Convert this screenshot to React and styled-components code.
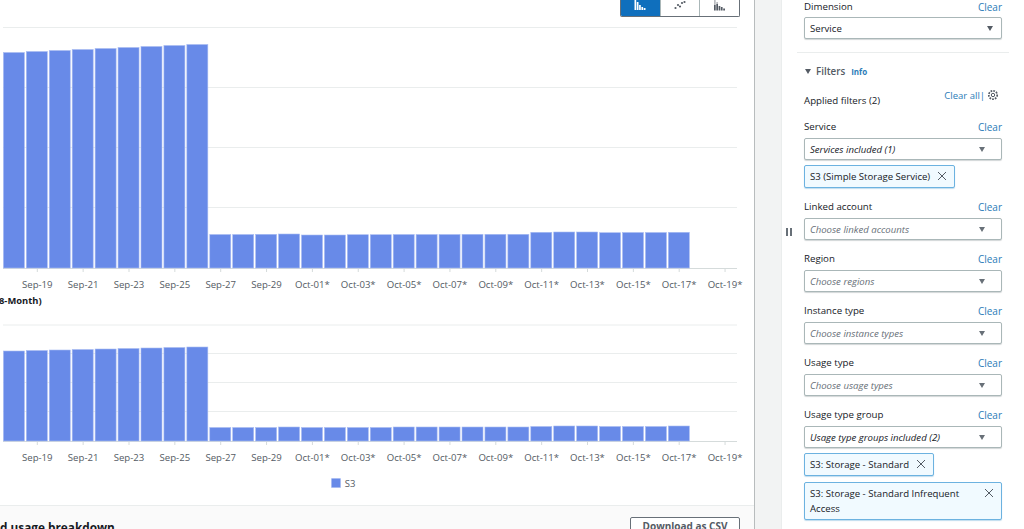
import React from 'react';
import styled, { createGlobalStyle } from 'styled-components';

const Global = createGlobalStyle`
  html, body { margin: 0; padding: 0; background: #fff; }
  body { font-family: "Open Sans", "Noto Sans", sans-serif; color: #16191f; }
`;

const Page = styled.div`
  display: flex;
  width: 1024px;
  height: 529px;
  overflow: hidden;
`;

const Main = styled.main`
  width: 755px;
  flex: none;
  display: flex;
  flex-direction: column;
  border-right: 1px solid #b8bcbd;
  box-sizing: border-box;
`;

const Toolbar = styled.div`
  display: flex;
  justify-content: flex-end;
  height: 17px;
  padding-right: 14px;
  flex: none;
`;

const ToggleGroup = styled.div`
  display: flex;
  width: 120px;
  box-sizing: border-box;
  border: 1px solid #687078;
  border-top: none;
  border-radius: 0 0 2px 2px;
  height: 16.5px;
  overflow: hidden;
`;

const Toggle = styled.div`
  flex: 1;
  display: flex;
  align-items: flex-start;
  justify-content: center;
  background: ${p => (p.$active ? '#0f6fbd' : '#fff')};
  color: ${p => (p.$active ? '#fff' : '#545b64')};
  & + & { border-left: 1px solid #aab7b8; }
`;

const ChartSvg = styled.svg`
  display: block;
  flex: none;
`;

const ChartTitle = styled.div`
  height: 15px;
  margin-left: -1px;
  font-size: 9.4px;
  font-weight: 700;
  line-height: 15px;
  color: #16191f;
  flex: none;
`;

const Legend = styled.div`
  display: flex;
  justify-content: center;
  align-items: center;
  gap: 4px;
  height: 14px;
  margin-top: 11px;
  padding-right: 68px;
  font-size: 9.5px;
  color: #545b64;
  flex: none;
`;

const Swatch = styled.span`
  width: 10px;
  height: 10px;
  background: #688ae8;
  border: 1px solid #a9bcf2;
  box-sizing: border-box;
  border-radius: 1px;
`;

const Footer = styled.div`
  flex: 1;
  margin-top: 15px;
  border-top: 1px solid #eaeded;
  background: #fafafa;
  display: flex;
  justify-content: space-between;
  align-items: flex-start;
  padding: 11px 14px 0 0;
`;

const FooterTitle = styled.div`
  font-size: 11.8px;
  font-weight: 700;
  line-height: 16px;
  margin-top: 2px;
`;

const CsvButton = styled.div`
  width: 110px;
  height: 26px;
  box-sizing: border-box;
  border: 1px solid #687078;
  border-radius: 2px;
  background: #fff;
  text-align: center;
  font-size: 10px;
  font-weight: 700;
  color: #545b64;
  line-height: 17px;
`;

const Gutter = styled.div`
  width: 27px;
  flex: none;
  background: #f2f3f3;
  border-right: 1px solid #eaeded;
  box-sizing: border-box;
`;

const Rail = styled.div`
  width: 22px;
  flex: none;
  box-sizing: border-box;
  padding: 228px 0 0 4px;
`;

const Handle = styled.div`
  display: flex;
  gap: 2.5px;
  height: 8px;
  & > span { width: 1.5px; background: #687078; }
`;

const Side = styled.aside`
  flex: 1;
  min-width: 0;
  background: #fff;
  padding: 0 22px 0 0;
  font-size: 9.7px;
  display: flex;
  flex-direction: column;
`;

const FieldHead = styled.div`
  display: flex;
  justify-content: space-between;
  align-items: center;
  height: 14px;
  margin-bottom: ${p => p.$mb ?? 4}px;
  line-height: 14px;
  color: #16191f;
`;

const Clear = styled.span`
  color: #2b7cb8;
  font-size: 10px;
`;

const Field = styled.div`
  margin-bottom: ${p => p.$mb ?? 12}px;
`;

const Select = styled.div`
  height: 22px;
  box-sizing: border-box;
  border: 1px solid #aab7b8;
  border-radius: 2px;
  display: flex;
  align-items: center;
  justify-content: space-between;
  padding: 0 ${p => (p.$wide ? 8 : 16)}px 0 5px;
  font-size: 9.6px;
  font-style: ${p => (p.$plain ? 'normal' : 'italic')};
  color: ${p => (p.$muted ? '#687078' : '#16191f')};
  box-shadow: 0 1px 1px rgba(0, 28, 36, 0.18);
  background: #fff;
`;

const Caret = styled.span`
  width: 0;
  height: 0;
  border-left: 3.5px solid transparent;
  border-right: 3.5px solid transparent;
  border-top: 5px solid ${p => p.$c || '#687078'};
`;

const Divider = styled.div`
  height: 1px;
  background: #eaeded;
  margin: 13px -7px 0;
`;

const FiltersHead = styled.div`
  display: flex;
  align-items: center;
  height: 14px;
  margin: 11px 0 0 1px;
  gap: 5px;
  font-weight: 600;
  color: #545b64;
  font-size: 9.8px;
`;

const Info = styled.span`
  color: #2b7cb8;
  font-weight: 700;
  font-size: 8px;
  margin-left: 1px;
`;

const AppliedRow = styled.div`
  display: flex;
  justify-content: space-between;
  align-items: flex-start;
  height: 34px;
  margin-top: 8px;
`;

const Applied = styled.span`
  margin-top: 8px;
  line-height: 14px;
`;

const ClearAll = styled.div`
  display: flex;
  align-items: center;
  color: #2b7cb8;
  font-size: 9.5px;
  height: 14px;
  margin-top: 2px;
  padding-right: 3px;
  gap: 2px;
  svg { color: #545b64; }
`;

const Token = styled.div`
  display: ${p => (p.$block ? 'flex' : 'inline-flex')};
  align-items: flex-start;
  justify-content: space-between;
  gap: 7px;
  box-sizing: border-box;
  margin-top: ${p => p.$mt ?? 5}px;
  padding: 3px 7px 3px 5px;
  min-height: 23px;
  width: ${p => (p.$block ? '100%' : 'auto')};
  background: #f1faff;
  border: 1px solid #6cb2e0;
  border-radius: 2px;
  font-size: 9.6px;
  line-height: 15px;
  color: #16191f;
  box-shadow: 0 1px 1px rgba(0, 115, 187, 0.25);
`;

const TokenX = styled.svg`
  flex: none;
  margin-top: 2px;
  color: #545b64;
`;

const BLUE = '#688ae8';
const tops1 = [52.5,51.5,50.5,49.5,48.5,47.5,46.5,45.5,44.5,234.5,234.5,234.3,234,235,235,234.7,234.7,234.5,234.5,234.5,234.3,234.3,234.3,232.3,232,232,232.7,232.5,232.5,232.3];
const tops2 = [351,350.5,350,349.5,349,348.5,348,347.5,347,427.5,427.5,427.5,427,427.5,427.5,427.5,427.5,427,427,427,427,427,427,426.5,426,426,426.5,426.5,426.5,426];
const labels = ['Sep-19','Sep-21','Sep-23','Sep-25','Sep-27','Sep-29','Oct-01*','Oct-03*','Oct-05*','Oct-07*','Oct-09*','Oct-11*','Oct-13*','Oct-15*','Oct-17*','Oct-19*'];

function Chart({ top, height, base, grid, tops }) {
  return (
    <ChartSvg width="754" height={height} viewBox={`0 ${top} 754 ${height}`}>
      {grid.map(y => <line key={y} x1="3" x2="737" y1={y} y2={y} stroke="#eaeded" strokeWidth="1" />)}
      <line x1="3" x2="737" y1={base + 0.5} y2={base + 0.5} stroke="#d5dbdb" strokeWidth="1" />
      {tops.map((t, i) => (
        <rect key={i} x={3.4 + i * 22.93} y={t} width={21} height={base - t} fill={BLUE} stroke="#a9bcf2" strokeWidth="0.6" />
      ))}
      {labels.map((l, i) => {
        const x = 37.3 + i * 45.85;
        return (
          <g key={l}>
            <line x1={x} x2={x} y1={base + 1} y2={base + 4} stroke="#d5dbdb" />
            <text x={x} y={base + 19.5} textAnchor="middle" fontSize="9.6" fill="#545b64" fontFamily='"Open Sans", sans-serif'>{l}</text>
          </g>
        );
      })}
    </ChartSvg>
  );
}

const X = ({ size = 10 }) => (
  <TokenX width={size} height={size} viewBox="0 0 10 10" fill="none" stroke="currentColor" strokeWidth="1">
    <path d="M1 1l8 8M9 1l-8 8" />
  </TokenX>
);

const FilterField = ({ label, value, muted, children, mb }) => (
  <Field $mb={mb}>
    <FieldHead><span>{label}</span><Clear>Clear</Clear></FieldHead>
    <Select $muted={muted}>{value}<Caret /></Select>
    {children}
  </Field>
);

export default function App() {
  return (
    <Page>
      <Global />
      <Main>
        <Toolbar>
          <ToggleGroup>
            <Toggle $active>
              <svg width="12" height="11" viewBox="0 0 12 11" fill="currentColor">
                <path d="M0.500 0h1.700v10H0.500zM2.800 2h1.700v8H2.800zM5.100 5h1.700v5H5.100zM7.400 7h1.700v3H7.400zM9.700 8h1.800v2H9.700z" />
              </svg>
            </Toggle>
            <Toggle>
              <svg width="12" height="10" viewBox="0 0 12 10" fill="currentColor">
                <circle cx="1.500" cy="8" r="1.100" /><circle cx="4" cy="5" r="1.100" /><circle cx="6" cy="6.500" r="1.100" />
                <circle cx="8" cy="3" r="1.100" /><circle cx="10.500" cy="2" r="1.100" />
              </svg>
            </Toggle>
            <Toggle>
              <svg width="13" height="11" viewBox="0 0 13 11" fill="currentColor">
                <path d="M1 5h1.700v5.500H1zM3.300 4h1.700v6.500H3.300zM5.600 6h1.700v4.500H5.600zM7.900 7h1.700v3.500H7.900zM10.200 8.500h1.800v2H10.200z" />
                <path d="M1 0h1.700v5H1zM3.300 2h1.700v2H3.300z" opacity="0.4" />
              </svg>
            </Toggle>
          </ToggleGroup>
        </Toolbar>
        <Chart top={17} height={276} base={268} grid={[27.5, 87.5, 147.5, 207.5]} tops={tops1} />
        <ChartTitle>8-Month)</ChartTitle>
        <Chart top={308} height={157} base={441} grid={[325, 353.5, 382.5, 411.5]} tops={tops2} />
        <Legend><Swatch />S3</Legend>
        <Footer>
          <FooterTitle>d usage breakdown</FooterTitle>
          <CsvButton>Download as CSV</CsvButton>
        </Footer>
      </Main>
      <Gutter />
      <Rail><Handle><span /><span /></Handle></Rail>
      <Side>
        <Field $mb={0}>
          <FieldHead $mb={3}><span>Dimension</span><Clear>Clear</Clear></FieldHead>
          <Select $plain $wide>Service<Caret $c="#545b64" /></Select>
        </Field>
        <Divider />
        <FiltersHead><Caret $c="#545b64" /><span>Filters</span><Info>Info</Info></FiltersHead>
        <AppliedRow>
          <Applied>Applied filters (2)</Applied>
          <ClearAll>
            <span>Clear all|</span>
            <svg width="12" height="12" viewBox="0 0 12 12" fill="none" stroke="currentColor">
              <circle cx="6" cy="6" r="1.700" />
              <circle cx="6" cy="6" r="4.200" strokeWidth="1.700" strokeDasharray="1.700 1.100" />
            </svg>
          </ClearAll>
        </AppliedRow>
        <FilterField label="Service" value="Services included (1)">
          <Token><span>S3 (Simple Storage Service)</span><X /></Token>
        </FilterField>
        <FilterField label="Linked account" value="Choose linked accounts" muted />
        <FilterField label="Region" value="Choose regions" muted />
        <FilterField label="Instance type" value="Choose instance types" muted />
        <FilterField label="Usage type" value="Choose usage types" muted />
        <FilterField label="Usage type group" value="Usage type groups included (2)" mb={0}>
          <Token><span>S3: Storage - Standard</span><X /></Token>
          <Token $block $mt={6}><span>S3: Storage - Standard Infrequent Access</span><X /></Token>
        </FilterField>
      </Side>
    </Page>
  );
}
